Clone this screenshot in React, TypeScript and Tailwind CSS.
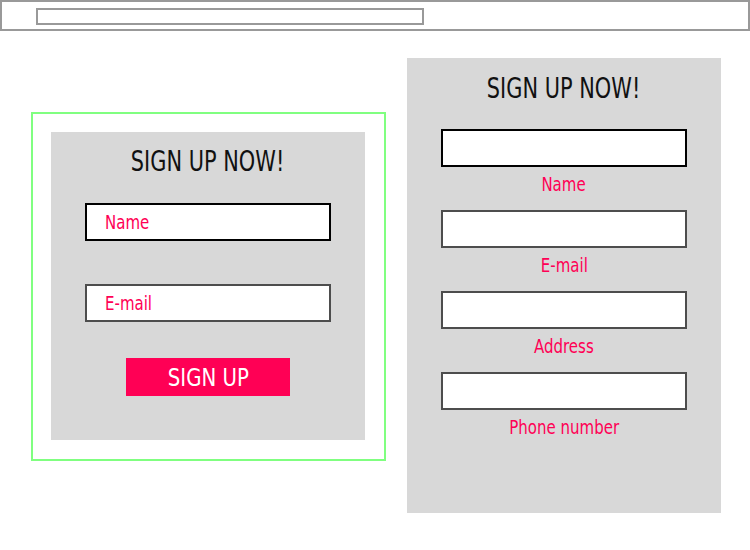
import React from 'react';

const font = "font-['DejaVu_Sans',sans-serif]";

const Title: React.FC = () => (
  <h2 className="text-[29px] leading-[32px] text-[#111] text-center">
    <span className="inline-block scale-x-[0.72]">SIGN UP NOW!</span>
  </h2>
);

const fields = ['Name', 'E-mail', 'Address', 'Phone number'];

const App: React.FC = () => {
  return (
    <div className={`w-[750px] h-[550px] bg-white ${font}`}>
      {/* top bar */}
      <div className="h-[31px] border-[2px] border-[#999999] pl-[34px] pt-[6px]">
        <div className="w-[388px] h-[17px] border-[2px] border-[#999999]"></div>
      </div>

      <div className="flex items-start pl-[31px] mt-[27px]">
        {/* compact form, highlighted */}
        <div className="mt-[54px] w-[355px] h-[349px] border-[2px] border-[#80ff80] p-[18px]">
          <div className="w-[314px] h-[308px] bg-[#d8d8d8] pt-[13px] flex flex-col items-center">
            <Title />
            <div className="mt-[26px] w-[246px] h-[38px] border-[2px] border-black bg-white flex items-center pl-[18px] text-[20px] text-[#ff0055]">
              <span className="inline-block origin-left scale-x-[0.75]">Name</span>
            </div>
            <div className="mt-[43px] w-[246px] h-[38px] border-[2px] border-[#4d4d4d] bg-white flex items-center pl-[18px] text-[20px] text-[#ff0055]">
              <span className="inline-block origin-left scale-x-[0.75]">E-mail</span>
            </div>
            <button className="mt-[36px] w-[164px] h-[38px] bg-[#ff0055] text-white text-[25px] leading-none flex items-center justify-center">
              <span className="inline-block scale-x-[0.79]">SIGN UP</span>
            </button>
          </div>
        </div>

        {/* tall form with labels below */}
        <div className="ml-[21px] w-[314px] h-[455px] bg-[#d8d8d8] pt-[14px] flex flex-col items-center">
          <Title />
          <div className="mt-[25px] flex flex-col items-center">
            {fields.map((f, i) => (
              <div key={f} className="flex flex-col items-center">
                <div
                  className={`w-[246px] h-[38px] bg-white border-[2px] ${i === 0 ? 'border-black' : 'border-[#4d4d4d]'}`}
                ></div>
                <p className="mt-[5px] mb-[14px] h-[24px] leading-[24px] text-[20px] text-[#ff0055]">
                  <span className="inline-block scale-x-[0.75]">{f}</span>
                </p>
              </div>
            ))}
          </div>
        </div>
      </div>
    </div>
  );
};

export default App;
